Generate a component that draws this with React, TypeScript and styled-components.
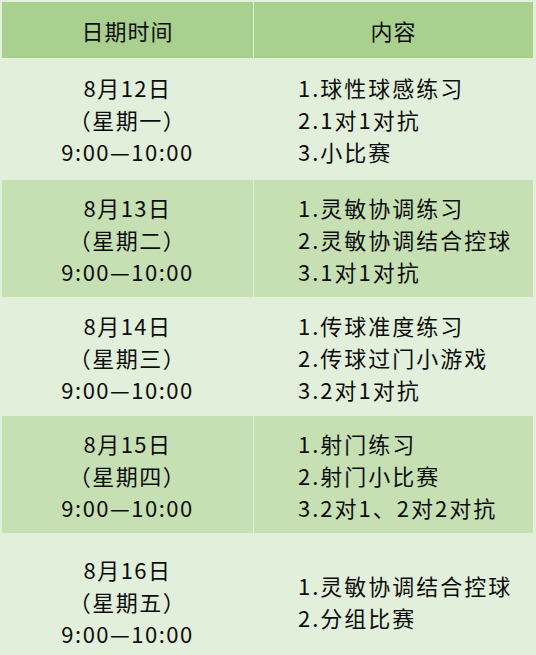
import styled, { createGlobalStyle } from "styled-components";

const GlobalStyle = createGlobalStyle`
  html, body {
    margin: 0;
    padding: 0;
    background: #e2efda;
    overflow: hidden;
  }
  body {
    font-family: "Noto Sans CJK SC", "Noto Sans", sans-serif;
    color: #0d0d0d;
  }
`;

const Table = styled.div`
  display: grid;
  grid-template-columns: 251px 279px;
  grid-template-rows: 56px 120px 117px 117px 117px 134px;
  column-gap: 1px;
  row-gap: 1px;
  padding: 2px 3px 0 2px;
  width: 536px;
  box-sizing: border-box;
`;

const HeaderCell = styled.div`
  background: #a9d08e;
  display: flex;
  align-items: center;
  justify-content: center;
  font-size: 22px;
  letter-spacing: 1px;
  line-height: 32px;
`;

const Cell = styled.div<{ $dark: boolean }>`
  background: ${(p) => (p.$dark ? "#c6e0b4" : "#e2efda")};
  display: flex;
  flex-direction: column;
  justify-content: center;
  font-size: 22px;
  line-height: 32px;
`;

const DateCell = styled(Cell)`
  align-items: center;
  text-align: center;
  letter-spacing: 1.5px;
`;

const ContentCell = styled(Cell)`
  align-items: flex-start;
  padding-left: 44px;
  letter-spacing: 2px;
`;

const Line = styled.div`
  white-space: nowrap;
`;

const schedule = [
  {
    date: "8月12日",
    week: "（星期一）",
    items: ["1.球性球感练习", "2.1对1对抗", "3.小比赛"],
  },
  {
    date: "8月13日",
    week: "（星期二）",
    items: ["1.灵敏协调练习", "2.灵敏协调结合控球", "3.1对1对抗"],
  },
  {
    date: "8月14日",
    week: "（星期三）",
    items: ["1.传球准度练习", "2.传球过门小游戏", "3.2对1对抗"],
  },
  {
    date: "8月15日",
    week: "（星期四）",
    items: ["1.射门练习", "2.射门小比赛", "3.2对1、2对2对抗"],
  },
  {
    date: "8月16日",
    week: "（星期五）",
    items: ["1.灵敏协调结合控球", "2.分组比赛"],
  },
];

export default function App() {
  return (
    <>
      <GlobalStyle />
      <Table>
        <HeaderCell>日期时间</HeaderCell>
        <HeaderCell>内容</HeaderCell>
        {schedule.map((row, i) => (
          <>
            <DateCell key={`d${i}`} $dark={i % 2 === 1}>
              <Line>{row.date}</Line>
              <Line>{row.week}</Line>
              <Line>9:00—10:00</Line>
            </DateCell>
            <ContentCell key={`c${i}`} $dark={i % 2 === 1}>
              {row.items.map((item) => (
                <Line key={item}>{item}</Line>
              ))}
            </ContentCell>
          </>
        ))}
      </Table>
    </>
  );
}
